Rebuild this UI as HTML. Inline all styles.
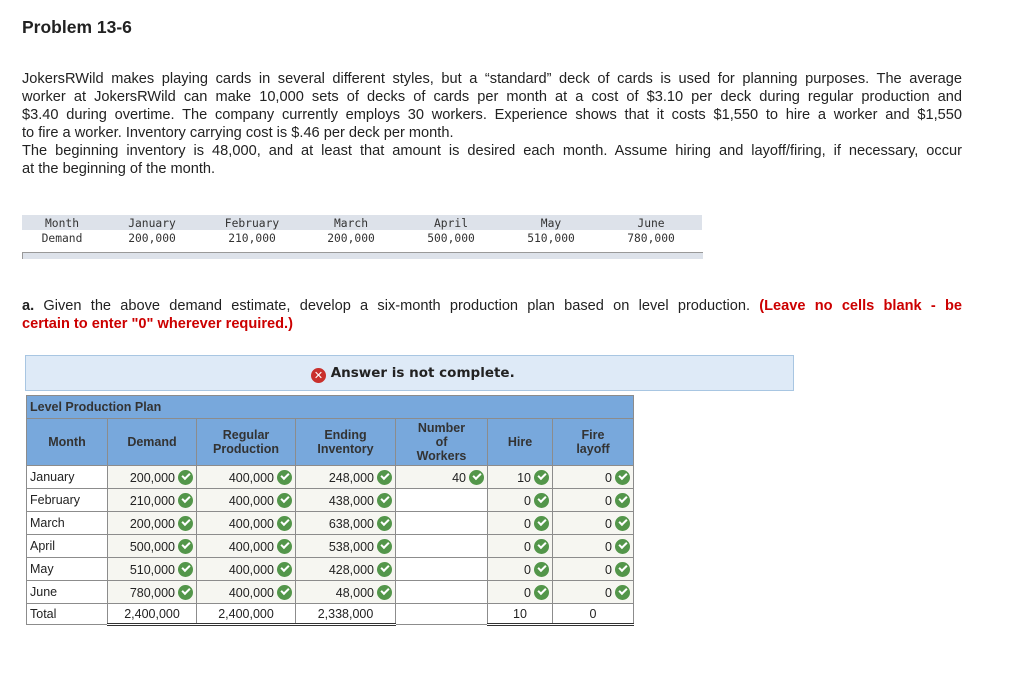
<!DOCTYPE html>
<html><head><style>
body{margin:0;width:1023px;height:683px;background:#fff;font-family:"Liberation Sans",sans-serif;color:#222;position:relative;overflow:hidden}
.a{position:absolute}
h1{position:absolute;left:22px;top:17px;margin:0;font-size:17.5px;font-weight:bold;color:#222}
.p{position:absolute;left:22px;width:940px;font-size:14.6px;line-height:18px}
.p div{text-align:justify;text-align-last:justify;white-space:nowrap;overflow:visible}
.p div.l{text-align-last:left}
.mono{font-family:"DejaVu Sans Mono","Liberation Mono",monospace;font-size:11.3px;color:#333;line-height:15px}
.mono div{position:absolute;width:100px;text-align:center;top:0}
table.t{position:absolute;left:26px;top:395px;border-collapse:collapse;font-size:12.5px}
.t td{border:1px solid #8c8c8c;height:23px;padding:0 3px;box-sizing:border-box}
.t .hd td{background:#78a8dc;font-weight:bold;color:#333;text-align:center;line-height:14px}
.t td.v{background:#f6f6f1;text-align:right}
.ck{display:inline-block;width:15px;height:15px;border-radius:50%;background:#53964a;vertical-align:-3px;margin-left:3px;position:relative}
.ck:after{content:"";position:absolute;left:4px;top:3px;width:6px;height:3px;border-left:2px solid #fff;border-bottom:2px solid #fff;transform:rotate(-45deg)}
.tot td{border-bottom:3px double #333;height:21px}
</style></head><body>
<h1>Problem 13-6</h1>
<div class="p" style="top:70px">
<div>JokersRWild makes playing cards in several different styles, but a “standard” deck of cards is used for planning purposes. The average</div>
<div>worker at JokersRWild can make 10,000 sets of decks of cards per month at a cost of $3.10 per deck during regular production and</div>
<div>$3.40 during overtime. The company currently employs 30 workers. Experience shows that it costs $1,550 to hire a worker and $1,550</div>
<div class="l">to fire a worker. Inventory carrying cost is $.46 per deck per month.</div>
<div>The beginning inventory is 48,000, and at least that amount is desired each month. Assume hiring and layoff/firing, if necessary, occur</div>
<div class="l">at the beginning of the month.</div>
</div>

<div class="a" style="left:22px;top:215px;width:680px;height:15px;background:#dde2ea"></div>
<div class="a" style="left:22px;top:252px;width:680px;height:6px;background:#dde2ea;border-top:1px solid #999;border-left:1px solid #999"></div>
<div class="a mono" style="left:0;top:216px;width:720px">
<div style="left:12px">Month<br>Demand</div>
<div style="left:102px">January<br>200,000</div>
<div style="left:202px">February<br>210,000</div>
<div style="left:301px">March<br>200,000</div>
<div style="left:401px">April<br>500,000</div>
<div style="left:501px">May<br>510,000</div>
<div style="left:601px">June<br>780,000</div>
</div>

<div class="p" style="top:297px">
<div><b>a.</b> Given the above demand estimate, develop a six-month production plan based on level production. <b style="color:#c00">(Leave no cells blank - be</b></div>
<div class="l"><b style="color:#c00">certain to enter "0" wherever required.)</b></div>
</div>

<div class="a" style="left:25px;top:355px;width:767px;height:34px;background:#deeaf7;border:1px solid #a8c6e2"></div>
<div class="a" style="left:311px;top:365px;font-size:13.5px;font-weight:bold;color:#222;font-family:'DejaVu Sans',sans-serif"><span style="display:inline-block;width:15px;height:15px;border-radius:50%;background:#c9302c;color:#fff;font-size:11px;text-align:center;line-height:15px;vertical-align:-2px">✕</span> Answer is not complete.</div>

<table class="t">
<tr class="hd"><td colspan="7" style="text-align:left;height:23px">Level Production Plan</td></tr>
<tr class="hd" style="height:47px"><td style="width:81px;height:47px">Month</td><td style="width:89px">Demand</td><td style="width:99px">Regular<br>Production</td><td style="width:100px">Ending<br>Inventory</td><td style="width:92px">Number<br>of<br>Workers</td><td style="width:65px">Hire</td><td style="width:81px">Fire<br>layoff</td></tr>
<tr><td>January</td><td class="v">200,000<i class="ck"></i></td><td class="v">400,000<i class="ck"></i></td><td class="v">248,000<i class="ck"></i></td><td class="v">40<i class="ck"></i></td><td class="v">10<i class="ck"></i></td><td class="v">0<i class="ck"></i></td></tr>
<tr><td>February</td><td class="v">210,000<i class="ck"></i></td><td class="v">400,000<i class="ck"></i></td><td class="v">438,000<i class="ck"></i></td><td></td><td class="v">0<i class="ck"></i></td><td class="v">0<i class="ck"></i></td></tr>
<tr><td>March</td><td class="v">200,000<i class="ck"></i></td><td class="v">400,000<i class="ck"></i></td><td class="v">638,000<i class="ck"></i></td><td></td><td class="v">0<i class="ck"></i></td><td class="v">0<i class="ck"></i></td></tr>
<tr><td>April</td><td class="v">500,000<i class="ck"></i></td><td class="v">400,000<i class="ck"></i></td><td class="v">538,000<i class="ck"></i></td><td></td><td class="v">0<i class="ck"></i></td><td class="v">0<i class="ck"></i></td></tr>
<tr><td>May</td><td class="v">510,000<i class="ck"></i></td><td class="v">400,000<i class="ck"></i></td><td class="v">428,000<i class="ck"></i></td><td></td><td class="v">0<i class="ck"></i></td><td class="v">0<i class="ck"></i></td></tr>
<tr><td>June</td><td class="v">780,000<i class="ck"></i></td><td class="v">400,000<i class="ck"></i></td><td class="v">48,000<i class="ck"></i></td><td></td><td class="v">0<i class="ck"></i></td><td class="v">0<i class="ck"></i></td></tr>
<tr class="tot"><td style="border-bottom:1px solid #8c8c8c">Total</td><td style="text-align:center">2,400,000</td><td style="text-align:center">2,400,000</td><td style="text-align:center">2,338,000</td><td style="border-bottom:1px solid #8c8c8c"></td><td style="text-align:center">10</td><td style="text-align:center">0</td></tr>
</table>
</body></html>
